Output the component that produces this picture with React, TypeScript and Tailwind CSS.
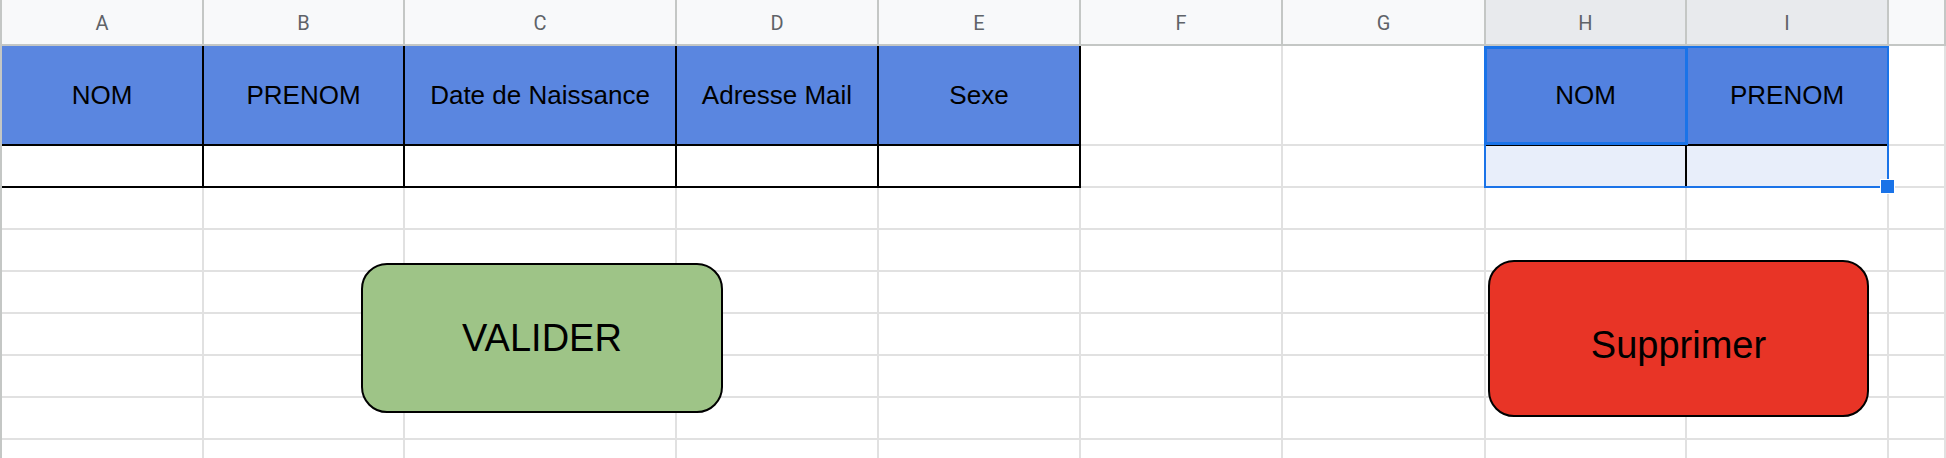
const colLetters = ["A", "B", "C", "D", "E", "F", "G", "H", "I", ""];

const colWidths = [
  "w-[202px]",
  "w-[201px]",
  "w-[272px]",
  "w-[202px]",
  "w-[202px]",
  "w-[202px]",
  "w-[203px]",
  "w-[201px]",
  "w-[202px]",
  "flex-1",
];

type CellProps = {
  width: string;
  className?: string;
  children?: React.ReactNode;
};

function Cell({ width, className = "border-[#e1e1e1] bg-white", children }: CellProps) {
  return (
    <div
      className={`${width} shrink-0 h-full border-r-2 border-b-2 flex items-center justify-center text-[26px] text-black ${className}`}
    >
      {children}
    </div>
  );
}

const tableHead = "border-black bg-[#5a86e0]";
const tableHeadSel = "border-black bg-[#5281df]";
const tableBody = "border-black bg-white";
const tableBodySel = "border-black bg-[#e8eefa]";

function ColumnHeader() {
  return (
    <div className="flex h-[46px]">
      {colLetters.map((l, i) => (
        <div
          key={i}
          className={`${colWidths[i]} shrink-0 h-full border-r-2 border-b-2 border-[#c4c7c5] flex items-center justify-center pt-[1px] text-[20px] text-[#5f6368] ${
            l === "H" || l === "I" ? "bg-[#e8eaed]" : "bg-[#f8f9fa]"
          }`}
          style={{ fontFamily: "Roboto, 'Liberation Sans', sans-serif" }}
        >
          {l}
        </div>
      ))}
    </div>
  );
}

function EmptyRow() {
  return (
    <div className="flex h-[42px]">
      {colWidths.map((w, i) => (
        <Cell key={i} width={w} />
      ))}
    </div>
  );
}

export default function App() {
  return (
    <div
      className="relative flex w-[1946px] h-[458px] overflow-hidden bg-white"
      style={{ fontFamily: "'Liberation Sans', Arial, sans-serif" }}
    >
      {/* bord de l'en-tête de lignes */}
      <div className="w-[2px] shrink-0 bg-[#c4c7c5]" />

      <div className="flex-1">
        <ColumnHeader />

        {/* ligne 1 : entêtes du tableau */}
        <div className="flex h-[100px]">
          <Cell width={colWidths[0]} className={tableHead}>NOM</Cell>
          <Cell width={colWidths[1]} className={tableHead}>PRENOM</Cell>
          <Cell width={colWidths[2]} className={tableHead}>Date de Naissance</Cell>
          <Cell width={colWidths[3]} className={tableHead}>Adresse Mail</Cell>
          <Cell width={colWidths[4]} className={tableHead}>Sexe</Cell>
          <Cell width={colWidths[5]} />
          <Cell width={colWidths[6]} />
          <Cell width={colWidths[7]} className={tableHeadSel}>NOM</Cell>
          <Cell width={colWidths[8]} className={tableHeadSel}>PRENOM</Cell>
          <Cell width={colWidths[9]} />
        </div>

        {/* ligne 2 : saisie */}
        <div className="flex h-[42px]">
          <Cell width={colWidths[0]} className={tableBody} />
          <Cell width={colWidths[1]} className={tableBody} />
          <Cell width={colWidths[2]} className={tableBody} />
          <Cell width={colWidths[3]} className={tableBody} />
          <Cell width={colWidths[4]} className={tableBody} />
          <Cell width={colWidths[5]} />
          <Cell width={colWidths[6]} />
          <Cell width={colWidths[7]} className={tableBodySel} />
          <Cell width={colWidths[8]} className={tableBodySel} />
          <Cell width={colWidths[9]} />
        </div>

        {Array.from({ length: 7 }).map((_, i) => (
          <EmptyRow key={i} />
        ))}
      </div>

      {/* sélection H1:I2 */}
      <div className="absolute left-[1484px] top-[46px] w-[405px] h-[142px] border-2 border-[#1a73e8] pointer-events-none" />
      <div className="absolute left-[1484px] top-[46px] w-[204px] h-[99px] border-[3px] border-[#1a73e8] pointer-events-none" />
      <div className="absolute left-[1880px] top-[179px] w-[15px] h-[15px] bg-[#1a73e8] border border-white" />

      {/* boutons dessinés */}
      <button className="absolute left-[361px] top-[263px] w-[362px] h-[150px] rounded-[26px] border-2 border-black bg-[#9ec487] flex items-center justify-center text-[38px] text-black">
        VALIDER
      </button>
      <button className="absolute left-[1488px] top-[260px] w-[381px] h-[157px] rounded-[26px] border-2 border-black bg-[#e83426] flex items-center justify-center pt-[14px] text-[38px] text-black">
        Supprimer
      </button>
    </div>
  );
}
